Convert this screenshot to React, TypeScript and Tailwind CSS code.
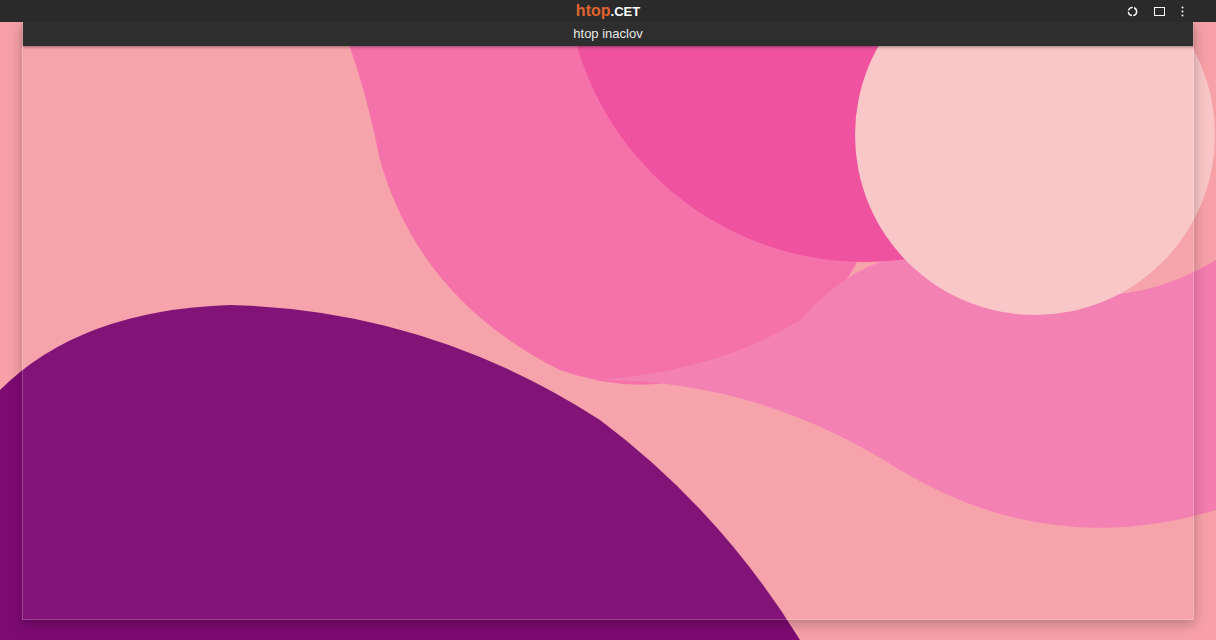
export default function App() {
  return (
    <div className="relative w-[1216px] h-[640px] overflow-hidden bg-[#f59aa6]" style={{ fontFamily: '"Liberation Sans", Arial, sans-serif' }}>
      <svg className="absolute inset-0" width="1216" height="640" viewBox="0 0 1216 640">
        <rect width="1216" height="640" fill="#f7a0a8" />
        <path d="M0 0 L330 0 Q360 60 380 160 Q420 300 560 370 Q700 420 830 300 Q900 230 900 0 Z" fill="#f56ca6" />
        <path d="M600 380 Q760 380 900 470 Q1050 560 1216 510 L1216 260 Q1100 330 980 260 Q880 230 800 320 Q720 370 600 380 Z" fill="#f47cb0" />
        <circle cx="865" cy="-38" r="300" fill="#ef4c9c" />
        <circle cx="1035" cy="135" r="180" fill="#f9c5c6" />
        <path d="M0 390 Q80 310 230 305 Q430 310 600 420 Q720 510 800 640 L0 640 Z" fill="#7d0a72" />
      </svg>
      <div className="relative flex flex-col h-full">
        <div className="h-[22px] bg-[#2a2a2a] flex items-center relative shrink-0">
          <div className="absolute left-1/2 -translate-x-1/2 flex items-baseline font-bold text-[16px] leading-none">
            <span className="text-[#e0622e]">htop</span>
            <span className="text-white text-[13px]">.CET</span>
          </div>
          <div className="ml-auto flex items-center gap-[16px] pr-[32px] text-white">
            <svg width="11" height="11" viewBox="0 0 12 12"><circle cx="6" cy="6" r="4.5" fill="none" stroke="white" strokeWidth="1.6" strokeDasharray="6 1.5" /></svg>
            <div className="w-[11px] h-[9px] border-[1.5px] border-white" />
            <svg width="3" height="11" viewBox="0 0 3 11"><circle cx="1.5" cy="1.5" r="1" fill="white" /><circle cx="1.5" cy="5.5" r="1" fill="white" /><circle cx="1.5" cy="9.5" r="1" fill="white" /></svg>
          </div>
        </div>
        <div className="mx-[22px] h-[598px] flex flex-col bg-white/[0.04] shadow-[0_4px_12px_rgba(0,0,0,0.25)] border-x border-b border-white/20">
          <div className="h-[24px] bg-[#2e2e2e] flex items-center justify-center text-[#e8e8e8] text-[13px] shadow-[0_1px_3px_rgba(0,0,0,0.4)]">htop inaclov</div>
        </div>
      </div>
    </div>
  );
}
